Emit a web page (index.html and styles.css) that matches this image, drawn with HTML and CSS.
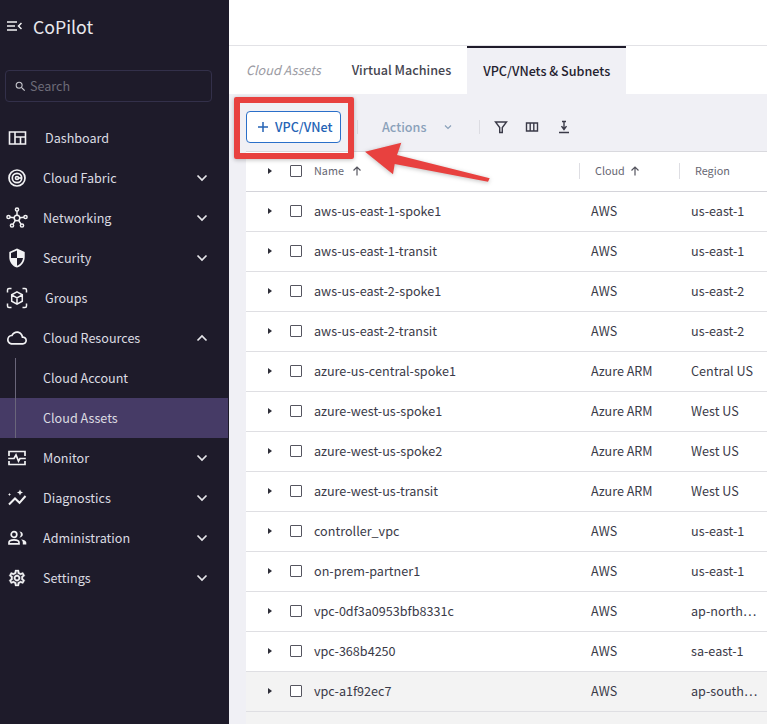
FILE: index.html
```html
<!DOCTYPE html>
<html lang="en">
<head>
<meta charset="utf-8">
<title>CoPilot</title>
<link rel="stylesheet" href="styles.css">
</head>
<body>
<div class="app">
  <aside class="sidebar">
    <div class="brand">
      <svg class="brand-icon" viewBox="0 0 15 10"><path d="M0 1h10M0 5h8M0 9h10M14.500 2l-3 3 3 3" fill="none" stroke="currentColor" stroke-width="1.500"/></svg>
      <span>CoPilot</span>
    </div>
    <div class="search">
      <svg class="search-icon" viewBox="0 0 24 24"><path d="M15.500 14h-.79l-.28-.27A6.470 6.470 0 0 0 16 9.500 6.500 6.500 0 1 0 9.500 16c1.610 0 3.090-.59 4.230-1.570l.27.28v.79l5 4.990L20.490 19l-4.990-5zm-6 0C7.010 14 5 11.990 5 9.500S7.010 5 9.500 5 14 7.010 14 9.500 11.990 14 9.500 14z" fill="currentColor"/></svg>
      <span class="txt">Search</span>
    </div>
    <nav class="nav">
      <div class="item wide">
        <svg class="icon" viewBox="0 0 24 24"><path d="M4.500 6h16v12h-16zM10 6v12M10 11h10.500M15.500 11v7" fill="none" stroke="currentColor" stroke-width="1.600"/></svg>
        <span class="label">Dashboard</span>
      </div>
      <div class="item">
        <svg class="icon" viewBox="0 0 24 24"><g fill="none" stroke="currentColor" stroke-width="1.700"><circle cx="12" cy="12" r="8"/><circle cx="12" cy="12" r="4.700"/><circle cx="12" cy="12" r="1.500"/><path d="M13.500 12h3.200"/></g></svg>
        <span class="label">Cloud Fabric</span>
        <svg class="chev" viewBox="0 0 12 8"><path d="M1.500 1.500 6 6l4.500-4.500" /></svg>
      </div>
      <div class="item">
        <svg class="icon" viewBox="0 0 24 24"><g fill="none" stroke="currentColor" stroke-width="1.500"><circle cx="12" cy="12" r="2.800"/><circle cx="12" cy="3.500" r="1.600"/><circle cx="3.500" cy="11" r="1.600"/><circle cx="20.500" cy="11" r="1.600"/><circle cx="7" cy="19.500" r="1.600"/><circle cx="17" cy="19.500" r="1.600"/><path d="M12 5.100v4.100M5.100 11.200l4.100.6M18.900 11.200l-4.100.6M8 18.200l2.400-3.800M16 18.200l-2.400-3.800"/></g></svg>
        <span class="label">Networking</span>
        <svg class="chev" viewBox="0 0 12 8"><path d="M1.500 1.500 6 6l4.500-4.500" /></svg>
      </div>
      <div class="item">
        <svg class="icon" viewBox="-2 -2 28 28"><path d="M12 1 3 5v6c0 5.550 3.840 10.740 9 12 5.160-1.260 9-6.450 9-12V5l-9-4zm0 10.990h7c-.53 4.120-3.280 7.790-7 8.940V12H5V6.300l7-3.110v8.800z" fill="currentColor"/></svg>
        <span class="label">Security</span>
        <svg class="chev" viewBox="0 0 12 8"><path d="M1.500 1.500 6 6l4.500-4.500" /></svg>
      </div>
      <div class="item wide">
        <svg class="icon" viewBox="0 0 24 24"><g fill="none" stroke="currentColor" stroke-width="1.500"><path d="M2.500 6.500V4a1.500 1.500 0 0 1 1.500-1.500h2.500M17.500 2.500H20A1.500 1.500 0 0 1 21.500 4v2.500M21.500 17.500V20a1.500 1.500 0 0 1-1.500 1.500h-2.500M6.500 21.500H4A1.500 1.500 0 0 1 2.500 20v-2.500"/><path d="m12 5.800 5.300 3v6.400L12 18.200l-5.300-3V8.800zM6.700 8.800l5.300 3 5.300-3M12 11.800v6.400"/></g></svg>
        <span class="label">Groups</span>
      </div>
      <div class="item">
        <svg class="icon" viewBox="-2.400 -2.400 28.800 28.800"><path d="M19.350 10.040C18.670 6.590 15.640 4 12 4 9.110 4 6.600 5.640 5.350 8.040 2.340 8.360 0 10.910 0 14c0 3.310 2.690 6 6 6h13c2.760 0 5-2.240 5-5 0-2.640-2.050-4.780-4.650-4.960zM19 18H6c-2.210 0-4-1.790-4-4 0-2.050 1.530-3.760 3.560-3.970l1.070-.11.5-.95C8.080 7.140 9.940 6 12 6c2.620 0 4.880 1.860 5.390 4.430l.3 1.500 1.530.11c1.560.1 2.780 1.410 2.780 2.960 0 1.650-1.350 3-3 3z" fill="currentColor"/></svg>
        <span class="label">Cloud Resources</span>
        <svg class="chev" viewBox="0 0 12 8"><path d="M1.500 6.500 6 2l4.500 4.500" /></svg>
      </div>
      <div class="subnav">
        <div class="item sub"><span class="label">Cloud Account</span></div>
        <div class="item sub active"><span class="label">Cloud Assets</span></div>
      </div>
      <div class="item">
        <svg class="icon" viewBox="0 0 24 24"><path d="M4 10V5.500h16V10M4 15v3.500h16V15M3.200 12.500H9l2-3.500 2.500 6 1.500-2.500h5.800" fill="none" stroke="currentColor" stroke-width="1.700"/></svg>
        <span class="label">Monitor</span>
        <svg class="chev" viewBox="0 0 12 8"><path d="M1.500 1.500 6 6l4.500-4.500" /></svg>
      </div>
      <div class="item">
        <svg class="icon" viewBox="0 0 24 24"><path d="m4 18.500 6-6 4.500 4.300 6-6.800" fill="none" stroke="currentColor" stroke-width="2"/><path d="m15 3.500.9 2.100 2.100.9-2.100.9-.9 2.100-.9-2.100-2.100-.9 2.100-.9zM4.500 7l.5 1 1 .5-1 .5-.5 1-.5-1-1-.5 1-.5z" fill="currentColor"/></svg>
        <span class="label">Diagnostics</span>
        <svg class="chev" viewBox="0 0 12 8"><path d="M1.500 1.500 6 6l4.500-4.500" /></svg>
      </div>
      <div class="item">
        <svg class="icon" viewBox="0 0 24 24"><g fill="none" stroke="currentColor" stroke-width="1.700"><circle cx="9" cy="8.500" r="2.800"/><path d="M4 17.800v-1.200c0-1.700 2.500-2.700 5-2.700s5 1 5 2.700v1.200z"/></g><path d="M14.300 5.600a3.500 3.500 0 0 1 0 5.800c2.100 0 3.500-1.300 3.500-2.900s-1.400-2.900-3.500-2.900zM16 13.500c1.200.8 1.800 1.800 1.800 3.100v1.900h3.500v-1.900c0-1.800-2.400-2.900-5.300-3.100z" fill="currentColor"/></svg>
        <span class="label">Administration</span>
        <svg class="chev" viewBox="0 0 12 8"><path d="M1.500 1.500 6 6l4.500-4.500" /></svg>
      </div>
      <div class="item">
        <svg class="icon" viewBox="-3 -3 30 30"><path d="M19.430 12.980c.04-.32.07-.64.07-.98 0-.34-.03-.66-.07-.98l2.110-1.650c.19-.15.24-.42.120-.64l-2-3.460c-.09-.16-.26-.25-.44-.25-.06 0-.12.01-.17.03l-2.490 1c-.52-.4-1.080-.73-1.690-.98l-.38-2.650C14.460 2.180 14.250 2 14 2h-4c-.25 0-.46.18-.49.42l-.38 2.650c-.61.25-1.170.59-1.690.98l-2.490-1c-.06-.02-.12-.03-.18-.03-.17 0-.34.09-.43.25l-2 3.460c-.13.22-.07.49.12.64l2.110 1.650c-.04.32-.07.65-.07.98 0 .33.03.66.07.98l-2.110 1.650c-.19.15-.24.42-.12.64l2 3.460c.09.16.26.25.44.25.06 0 .12-.01.17-.03l2.490-1c.52.4 1.080.73 1.690.98l.38 2.650c.03.24.24.42.49.42h4c.25 0 .46-.18.49-.42l.38-2.650c.61-.25 1.170-.59 1.690-.98l2.490 1c.06.02.12.03.18.03.17 0 .34-.09.43-.25l2-3.460c.12-.22.07-.49-.12-.64l-2.110-1.650zm-1.980-1.710c.04.31.05.52.05.73 0 .21-.02.43-.05.73l-.14 1.130.89.7 1.080.84-.7 1.210-1.270-.51-1.040-.42-.9.68c-.43.32-.84.56-1.250.73l-1.060.43-.16 1.130-.2 1.350h-1.400l-.19-1.350-.16-1.130-1.060-.43c-.43-.18-.83-.41-1.230-.71l-.91-.7-1.060.43-1.270.51-.7-1.210 1.080-.84.89-.7-.14-1.130c-.03-.31-.05-.54-.05-.74s.02-.43.05-.73l.14-1.130-.89-.7-1.080-.84.7-1.210 1.270.51 1.040.42.9-.68c.43-.32.84-.56 1.250-.73l1.060-.43.16-1.130.2-1.350h1.390l.19 1.350.16 1.130 1.060.43c.43.18.83.41 1.230.71l.91.7 1.060-.43 1.270-.51.7 1.210-1.070.85-.89.7.14 1.130zM12 8c-2.210 0-4 1.790-4 4s1.790 4 4 4 4-1.790 4-4-1.790-4-4-4zm0 6c-1.100 0-2-.9-2-2s.9-2 2-2 2 .9 2 2-.9 2-2 2z" fill="currentColor" stroke="currentColor" stroke-width=".4"/></svg>
        <span class="label">Settings</span>
        <svg class="chev" viewBox="0 0 12 8"><path d="M1.500 1.500 6 6l4.500-4.500" /></svg>
      </div>
    </nav>
  </aside>

  <main class="main">
    <div class="topbar"></div>
    <div class="tabs">
      <span class="crumb">Cloud Assets</span>
      <span class="tab">Virtual Machines</span>
      <span class="tab tab-active">VPC/VNets &amp; Subnets</span>
    </div>
    <div class="panel">
      <div class="toolbar">
        <button class="add"><svg class="plus" viewBox="0 0 10 10"><path d="M5 0v10M0 5h10"/></svg><span class="txt">VPC/VNet</span></button>
        <span class="tsep first"></span>
        <span class="actions"><span class="txt">Actions</span><svg class="mini-chev" viewBox="0 0 8 6"><path d="m1 1.500 3 3 3-3"/></svg></span>
        <span class="tsep"></span>
        <svg class="tool" viewBox="0 0 14 14"><path d="M1.500 2h11L8.300 7.500V12.500H5.700V7.500z"/></svg>
        <svg class="tool" viewBox="0 0 14 14"><path d="M1.500 3h11v8h-11zM5.200 3v8M8.800 3v8"/></svg>
        <svg class="tool last" viewBox="0 0 14 14"><path d="M2 12.500h10M7 1.500v7M4.500 6.200 7 9.500l2.500-3.300M5 1.500h4"/></svg>
      </div>
      <div class="table">
        <div class="row head">
          <div class="cell first-cell">
            <span class="caret"></span><span class="check"></span>
            <span class="txt name">Name</span><svg class="arrow-up" viewBox="0 0 10 10"><path d="M5 9.500V1M1.500 4.500 5 1l3.500 3.500"/></svg>
          </div>
          <div class="cell col2 sep"><span class="txt">Cloud</span><svg class="arrow-up gap" viewBox="0 0 10 10"><path d="M5 9.500V1M1.500 4.500 5 1l3.500 3.500"/></svg></div>
          <div class="cell col3 sep"><span class="txt">Region</span></div>
        </div>
        <div class="row"><div class="cell first-cell"><span class="caret"></span><span class="check"></span><span class="txt">aws-us-east-1-spoke1</span></div><div class="cell col2"><span class="txt">AWS</span></div><div class="cell col3"><span class="txt">us-east-1</span></div></div>
        <div class="row"><div class="cell first-cell"><span class="caret"></span><span class="check"></span><span class="txt">aws-us-east-1-transit</span></div><div class="cell col2"><span class="txt">AWS</span></div><div class="cell col3"><span class="txt">us-east-1</span></div></div>
        <div class="row"><div class="cell first-cell"><span class="caret"></span><span class="check"></span><span class="txt">aws-us-east-2-spoke1</span></div><div class="cell col2"><span class="txt">AWS</span></div><div class="cell col3"><span class="txt">us-east-2</span></div></div>
        <div class="row"><div class="cell first-cell"><span class="caret"></span><span class="check"></span><span class="txt">aws-us-east-2-transit</span></div><div class="cell col2"><span class="txt">AWS</span></div><div class="cell col3"><span class="txt">us-east-2</span></div></div>
        <div class="row"><div class="cell first-cell"><span class="caret"></span><span class="check"></span><span class="txt">azure-us-central-spoke1</span></div><div class="cell col2"><span class="txt">Azure ARM</span></div><div class="cell col3"><span class="txt">Central US</span></div></div>
        <div class="row"><div class="cell first-cell"><span class="caret"></span><span class="check"></span><span class="txt">azure-west-us-spoke1</span></div><div class="cell col2"><span class="txt">Azure ARM</span></div><div class="cell col3"><span class="txt">West US</span></div></div>
        <div class="row"><div class="cell first-cell"><span class="caret"></span><span class="check"></span><span class="txt">azure-west-us-spoke2</span></div><div class="cell col2"><span class="txt">Azure ARM</span></div><div class="cell col3"><span class="txt">West US</span></div></div>
        <div class="row"><div class="cell first-cell"><span class="caret"></span><span class="check"></span><span class="txt">azure-west-us-transit</span></div><div class="cell col2"><span class="txt">Azure ARM</span></div><div class="cell col3"><span class="txt">West US</span></div></div>
        <div class="row"><div class="cell first-cell"><span class="caret"></span><span class="check"></span><span class="txt">controller_vpc</span></div><div class="cell col2"><span class="txt">AWS</span></div><div class="cell col3"><span class="txt">us-east-1</span></div></div>
        <div class="row"><div class="cell first-cell"><span class="caret"></span><span class="check"></span><span class="txt">on-prem-partner1</span></div><div class="cell col2"><span class="txt">AWS</span></div><div class="cell col3"><span class="txt">us-east-1</span></div></div>
        <div class="row"><div class="cell first-cell"><span class="caret"></span><span class="check"></span><span class="txt">vpc-0df3a0953bfb8331c</span></div><div class="cell col2"><span class="txt">AWS</span></div><div class="cell col3"><span class="txt">ap-north…</span></div></div>
        <div class="row"><div class="cell first-cell"><span class="caret"></span><span class="check"></span><span class="txt">vpc-368b4250</span></div><div class="cell col2"><span class="txt">AWS</span></div><div class="cell col3"><span class="txt">sa-east-1</span></div></div>
        <div class="row hover"><div class="cell first-cell"><span class="caret"></span><span class="check"></span><span class="txt">vpc-a1f92ec7</span></div><div class="cell col2"><span class="txt">AWS</span></div><div class="cell col3"><span class="txt">ap-south…</span></div></div>
        <div class="rest"></div>
      </div>
    </div>
    <div class="callout"></div>
    <svg class="pointer" viewBox="0 0 140 50"><path d="M5 21.700 41.300 12.700 37 25 129.700 48.300 128 51.700 34.700 34 33 44.300z"/></svg>
  </main>
</div>
</body>
</html>
```
FILE: styles.css
```css
* { box-sizing: border-box; }
html, body { margin: 0; height: 100%; overflow: hidden; }
body {
  font-family: "Noto Sans CJK SC", "Noto Sans", sans-serif;
  font-size: 12.6px;
  color: #3a3a48;
}
.app { display: flex; width: 767px; height: 724px; overflow: hidden; }
.txt { padding-bottom: 2px; }

.sidebar { width: 229px; flex: none; background: #1e1b2a; color: #dcdce2; }
.brand { display: flex; align-items: center; height: 52px; padding-left: 7px; gap: 11px; font-size: 17.7px; color: #e8e8ec; }
.brand-icon { width: 15px; height: 10px; color: #f2f2f4; }
.search {
  display: flex; align-items: center; gap: 3px;
  width: 207px; height: 32px; margin: 18px 0 16px 5px; padding-left: 8px;
  border: 1px solid #33304a; border-radius: 4px; color: #6d6b78;
}
.search-icon { width: 13px; height: 13px; color: #c8c8ce; }

.item { display: flex; align-items: center; height: 40px; padding: 0 20px 0 5px; }
.icon { width: 24px; height: 24px; flex: none; margin-right: 14px; color: #f2f2f4; }
.wide .icon { margin-right: 16px; }
.label { flex: 1; padding-bottom: 2px; }
.chev { width: 12px; height: 8px; flex: none; fill: none; stroke: #e6e6ea; stroke-width: 1.700; margin-right: 1px; }
.subnav { position: relative; }
.subnav::before { content: ""; position: absolute; left: 15px; top: 0; bottom: 0; width: 1px; background: #6a667a; }
.sub { padding-left: 43px; margin-right: 1px; }
.active { background: #463b66; }

.main { position: relative; flex: 1; min-width: 0; display: flex; flex-direction: column; background: #fff; }
.topbar { height: 46px; flex: none; border-bottom: 1px solid #e2e2e6; }
.tabs { display: flex; height: 48px; flex: none; align-items: stretch; background: #fff; padding-left: 17px; }
.crumb { display: flex; align-items: center; font-style: italic; color: #9b9ba3; margin-right: 31px; padding-bottom: 2px; }
.tab { display: flex; align-items: center; font-weight: 500; color: #45454f; margin-right: 16px; padding-bottom: 2px; }
.tab-active { margin: 0; padding: 0 16px 2px; background: #f0f0f5; border-top: 2px solid #1e1b2a; color: #24222f; }

.panel { flex: 1; background: #f0f0f5; padding-left: 17px; display: flex; flex-direction: column; min-height: 0; }
.toolbar { height: 57px; flex: none; display: flex; align-items: center; padding-top: 9px; }
.add {
  display: flex; align-items: center; gap: 7px;
  width: 95px; height: 32px; padding: 0 0 0 11px;
  background: #fff; border: 1px solid #2a6fc9; border-radius: 4px;
  color: #2563b5; font: 500 12.6px "Noto Sans CJK SC", "Noto Sans", sans-serif;
}
.plus { width: 10px; height: 10px; fill: none; stroke: currentColor; stroke-width: 1.500; }
.tsep { width: 1px; height: 14px; background: #dcdce2; margin-left: 0; margin-right: 14px; }
.tsep.first { margin-left: 16px; margin-right: 24px; }
.actions { display: flex; align-items: center; gap: 18px; font-weight: 500; color: #8aa1ba; width: 97px; }
.mini-chev { width: 8px; height: 6px; fill: none; stroke: #8aa1ba; stroke-width: 1.200; }
.tool { width: 14px; height: 14px; margin-right: 17px; fill: none; stroke: #3a3a48; stroke-width: 1.400; }
.tool.last { margin-left: 1px; }

.table { flex: 1; background: #fff; border-top: 1px solid #d9d9de; display: flex; flex-direction: column; min-height: 0; }
.row { display: grid; grid-template-columns: 333px 100px 1fr; height: 40px; flex: none; border-bottom: 1px solid #dfdfe3; }
.head { font-size: 10.8px; color: #666672; border-bottom: 1px solid #d4d4da; }
.hover { background: #f3f3f3; }
.rest { flex: 1; background: #f3f3f3; }
.cell { display: flex; align-items: center; position: relative; white-space: nowrap; overflow: hidden; padding-bottom: 1px; }
.first-cell { padding-left: 22px; }
.col2, .col3 { padding-left: 12px; }
.head .col2, .head .col3 { padding-left: 16px; }
.sep::before { content: ""; position: absolute; left: 0; top: 11px; height: 16px; width: 1px; background: #dedee3; }
.caret { width: 0; height: 0; border-left: 4px solid #2e2e38; border-top: 3px solid transparent; border-bottom: 3px solid transparent; margin-right: 18px; }
.check { width: 12px; height: 12px; border: 1.500px solid #55555f; border-radius: 1px; margin-right: 12px; background: #fff; }
.name { margin-right: 8px; }
.arrow-up { width: 10px; height: 10px; fill: none; stroke: #55555f; stroke-width: 1.200; }
.arrow-up.gap { margin-left: 5px; }

.callout { position: absolute; left: 5px; top: 97px; width: 120px; height: 62px; border: 6px solid #e8413f; border-radius: 2px; box-shadow: 0 1px 4px rgba(0,0,0,.25); }
.pointer { position: absolute; left: 131px; top: 130px; width: 140px; height: 50px; overflow: visible; fill: #e8413f; filter: drop-shadow(0 1px 2px rgba(0,0,0,.25)); }
```
